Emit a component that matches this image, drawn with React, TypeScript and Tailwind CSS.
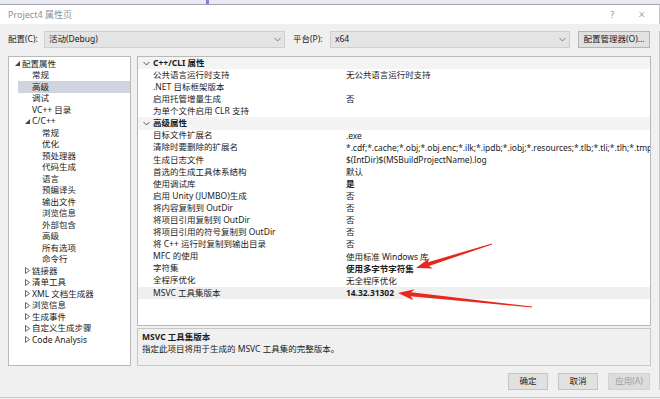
import React from "react";

type Node = { label: string; level: number; toggle?: "open" | "closed"; selected?: boolean };

const TREE: Node[] = [
  { label: "配置属性", level: 0, toggle: "open" },
  { label: "常规", level: 1 },
  { label: "高级", level: 1, selected: true },
  { label: "调试", level: 1 },
  { label: "VC++ 目录", level: 1 },
  { label: "C/C++", level: 1, toggle: "open" },
  { label: "常规", level: 2 },
  { label: "优化", level: 2 },
  { label: "预处理器", level: 2 },
  { label: "代码生成", level: 2 },
  { label: "语言", level: 2 },
  { label: "预编译头", level: 2 },
  { label: "输出文件", level: 2 },
  { label: "浏览信息", level: 2 },
  { label: "外部包含", level: 2 },
  { label: "高级", level: 2 },
  { label: "所有选项", level: 2 },
  { label: "命令行", level: 2 },
  { label: "链接器", level: 1, toggle: "closed" },
  { label: "清单工具", level: 1, toggle: "closed" },
  { label: "XML 文档生成器", level: 1, toggle: "closed" },
  { label: "浏览信息", level: 1, toggle: "closed" },
  { label: "生成事件", level: 1, toggle: "closed" },
  { label: "自定义生成步骤", level: 1, toggle: "closed" },
  { label: "Code Analysis", level: 1, toggle: "closed" },
];

type Row = { name: string; value?: string; category?: boolean; bold?: boolean; selected?: boolean };

const ROWS: Row[] = [
  { name: "C++/CLI 属性", category: true },
  { name: "公共语言运行时支持", value: "无公共语言运行时支持" },
  { name: ".NET 目标框架版本" },
  { name: "启用托管增量生成", value: "否" },
  { name: "为单个文件启用 CLR 支持" },
  { name: "高级属性", category: true },
  { name: "目标文件扩展名", value: ".exe" },
  {
    name: "清除时要删除的扩展名",
    value: "*.cdf;*.cache;*.obj;*.obj.enc;*.ilk;*.ipdb;*.iobj;*.resources;*.tlb;*.tli;*.tlh;*.tmp;*.rsp;*.pgc;*.pgd;*.meta;*.tlog",
  },
  { name: "生成日志文件", value: "$(IntDir)$(MSBuildProjectName).log" },
  { name: "首选的生成工具体系结构", value: "默认" },
  { name: "使用调试库", value: "是", bold: true },
  { name: "启用 Unity (JUMBO)生成", value: "否" },
  { name: "将内容复制到 OutDir", value: "否" },
  { name: "将项目引用复制到 OutDir", value: "否" },
  { name: "将项目引用的符号复制到 OutDir", value: "否" },
  { name: "将 C++ 运行时复制到输出目录", value: "否" },
  { name: "MFC 的使用", value: "使用标准 Windows 库" },
  { name: "字符集", value: "使用多字节字符集", bold: true },
  { name: "全程序优化", value: "无全程序优化" },
  { name: "MSVC 工具集版本", value: "14.32.31302", bold: true, selected: true },
];

function arrowPoints(tx: number, ty: number, px: number, py: number) {
  const len = Math.hypot(px - tx, py - ty);
  const dx = (px - tx) / len;
  const dy = (py - ty) / len;
  const nx = -dy;
  const ny = dx;
  const L = 16;
  const W = 5.5;
  const w = 2;
  const bx = px - dx * L;
  const by = py - dy * L;
  const pts = [
    [px, py],
    [bx + nx * W, by + ny * W],
    [bx + dx * 3 + nx * w, by + dy * 3 + ny * w],
    [tx + nx * 0.4, ty + ny * 0.4],
    [tx - nx * 0.4, ty - ny * 0.4],
    [bx + dx * 3 - nx * w, by + dy * 3 - ny * w],
    [bx - nx * W, by - ny * W],
  ];
  return pts.map((p) => p.join(",")).join(" ");
}

function Chevron({ className = "" }: { className?: string }) {
  return (
    <svg width="7" height="5" viewBox="0 0 7 5" className={className} aria-hidden="true">
      <polyline points="0.5,1 3.5,4 6.5,1" fill="none" stroke="currentColor" strokeWidth="1" />
    </svg>
  );
}

function Toggle({ kind }: { kind: "open" | "closed" }) {
  if (kind === "open") {
    return (
      <svg width="5" height="5" viewBox="0 0 5 5" aria-hidden="true">
        <polygon points="5,0 5,5 0,5" fill="#444" />
      </svg>
    );
  }
  return (
    <svg width="5" height="7" viewBox="0 0 5 7" aria-hidden="true">
      <polygon points="0.5,0.5 4.5,3.5 0.5,6.5" fill="none" stroke="#555" strokeWidth="0.9" />
    </svg>
  );
}

export default function App() {
  return (
    <div className="relative h-[399px] w-[660px] overflow-hidden bg-[#f0f0f0] font-['Noto_Sans','Noto_Sans_CJK_SC',sans-serif] text-[8.5px] leading-none text-[#1b1b1b]">
      {/* background window strip */}
      <div className="relative h-[5px] border-b border-[#a3a3b3] bg-[#e9e9f2]">
        <div className="absolute left-[206px] top-0 h-[4px] w-[3px] bg-[#7b86c9]" />
      </div>

      {/* Title bar */}
      <div className="flex h-[19px] items-center border-r border-[#c9c9c9] bg-white pl-[8px] pr-[14px] text-[#8f8f8f]">
        <span className="text-[9px]">Project4 属性页</span>
        <span className="ml-auto text-[9px]">?</span>
        <span className="ml-[24px] text-[12px] font-light">×</span>
      </div>

      <div className="border-r border-[#c9c9c9] px-[8px]">
        {/* Config row */}
        <div className="mt-[7px] flex h-[17px] items-center">
          <span className="w-[36px] shrink-0">配置(C):</span>
          <div className="flex h-full w-[241px] shrink-0 items-center border border-[#cfcfcf] bg-[#e4e4e4] pl-[4px] pr-[3px]">
            <span>活动(Debug)</span>
            <Chevron className="ml-auto text-[#777]" />
          </div>
          <span className="ml-[8px] w-[37px] shrink-0">平台(P):</span>
          <div className="flex h-full w-[240px] shrink-0 items-center border border-[#cfcfcf] bg-[#e4e4e4] pl-[4px] pr-[3px]">
            <span>x64</span>
            <Chevron className="ml-auto text-[#777]" />
          </div>
          <div className="ml-[8px] flex h-full w-[72px] shrink-0 items-center justify-center border border-[#b4b4b4] bg-[#e1e1e1]">
            配置管理器(O)...
          </div>
        </div>

        {/* Main area */}
        <div className="mt-[8px] flex h-[310px] gap-[6px]">
          {/* Tree */}
          <div className="w-[123px] shrink-0 border border-[#b9b9b9] bg-white pt-[1px]">
            {TREE.map((n, i) => (
              <div key={i} className="flex h-[11.5px] items-center whitespace-nowrap">
                <div
                  className={
                    "flex h-full items-center " +
                    (n.level === 0 ? "pl-[6px]" : n.level === 1 ? "pl-[16px]" : "pl-[26px]")
                  }
                >
                  <span className="flex w-[7px] items-center">{n.toggle && <Toggle kind={n.toggle} />}</span>
                </div>
                <div
                  className={
                    "flex h-full flex-1 items-center " +
                    (n.selected ? "ml-[-14px] bg-[#d1d4df] pl-[14px]" : "")
                  }
                >
                  {n.label}
                </div>
              </div>
            ))}
          </div>

          {/* Right column */}
          <div className="flex min-w-0 flex-1 flex-col gap-[2px]">
            <div className="h-[270px] overflow-hidden border border-[#b9b9b9] bg-white">
              {ROWS.map((r, i) =>
                r.category ? (
                  <div key={i} className="flex h-[12.1px] items-center bg-[#f4f4f4] pl-[5px] font-bold">
                    <Chevron className="text-[#555]" />
                    <span className="ml-[3px]">{r.name}</span>
                  </div>
                ) : (
                  <div
                    key={i}
                    className={"flex h-[12.1px] items-center " + (r.selected ? "bg-[#efefef]" : "")}
                  >
                    <span className="w-[208px] shrink-0 pl-[15px]">{r.name}</span>
                    <span
                      className={
                        "min-w-0 whitespace-nowrap leading-[12px] tracking-[-0.05px] " + (r.bold ? "font-bold" : "")
                      }
                    >
                      {r.value}
                    </span>
                  </div>
                )
              )}
            </div>
            <div className="h-[38px] border border-[#c6c6c6] bg-[#f0f0f0] px-[4px] pt-[4px]">
              <div className="font-bold">MSVC 工具集版本</div>
              <div className="mt-[3px]">指定此项目将用于生成的 MSVC 工具集的完整版本。</div>
            </div>
          </div>
        </div>

        {/* Buttons */}
        <div className="mt-[7px] flex h-[17px] justify-end gap-[10px] pr-[1px]">
          <div className="flex w-[40px] items-center justify-center border border-[#c4c4c4] bg-[#e1e1e1]">确定</div>
          <div className="flex w-[40px] items-center justify-center border border-[#c4c4c4] bg-[#e1e1e1]">取消</div>
          <div className="flex w-[42px] items-center justify-center border border-[#d2d2d2] bg-[#dcdcdc] text-[#9c9c9c]">
            应用(A)
          </div>
        </div>
      </div>

      <div className="absolute bottom-0 left-0 h-[2px] w-full border-t border-[#c9c9c9] bg-[#f0f0f0]" />

      {/* Annotation arrows */}
      <svg className="pointer-events-none absolute left-0 top-0" width="660" height="399" aria-hidden="true">
        <polygon points={arrowPoints(492, 244, 416, 268)} fill="#e8281e" />
        <polygon points={arrowPoints(532, 307, 398, 293)} fill="#e8281e" />
      </svg>
    </div>
  );
}
